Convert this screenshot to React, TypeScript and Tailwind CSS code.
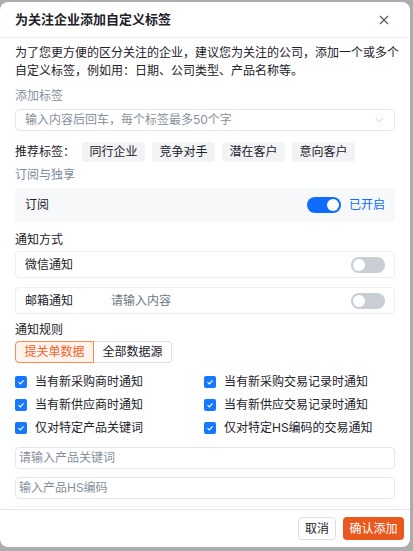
import React from "react";

const font = { fontFamily: 'Inter, "Noto Sans CJK SC", sans-serif' };

function Toggle({ on }: { on: boolean }) {
  return (
    <div
      className={`w-[34px] h-[16px] rounded-full flex items-center px-[2px] ${
        on ? "bg-[#0e6cff] justify-end" : "bg-[#c9cdd4] justify-start"
      }`}
    >
      <div className="w-[12px] h-[12px] rounded-full bg-white" />
    </div>
  );
}

function Check({ label }: { label: string }) {
  return (
    <div className="flex items-center h-[18px]">
      <div className="w-[12px] h-[12px] rounded-[2px] bg-[#1677ff] flex items-center justify-center">
        <svg width="8" height="8" viewBox="0 0 8 8">
          <path d="M1.5 4.2 L3.3 5.9 L6.6 2.3" stroke="white" strokeWidth="1.1" fill="none" />
        </svg>
      </div>
      <span className="ml-[8px] text-[12px] text-[#1d2129]">{label}</span>
    </div>
  );
}

export default function App() {
  return (
    <div className="w-[413px] h-[551px] bg-[#adadad] pt-[2px] overflow-hidden" style={font}>
      <div className="w-[410px] h-[545px] bg-white rounded-[8px] flex flex-col overflow-hidden">
        <div className="h-[36px] shrink-0 border-b border-[#eceef2] flex items-center justify-between px-[15px]">
          <span className="text-[13px] font-bold text-[#1d2129]">为关注企业添加自定义标签</span>
          <svg width="10" height="10" viewBox="0 0 10 10" className="mr-[6px]">
            <path d="M1 1 L9 9 M9 1 L1 9" stroke="#4e5969" strokeWidth="1.2" />
          </svg>
        </div>

        <div className="flex-1 flex flex-col px-[15px] pt-[6px]">
          <p className="text-[12px] leading-[18px] text-[#1d2129]">
            <span className="block whitespace-nowrap">为了您更方便的区分关注的企业，建议您为关注的公司，添加一个或多个</span>
            <span className="block whitespace-nowrap">自定义标签，例如用：日期、公司类型、产品名称等。</span>
          </p>
          <div className="mt-[7px] text-[12px] leading-[18px] text-[#86909c]">添加标签</div>
          <div className="mt-[4px] h-[22px] border border-[#e5e6eb] rounded-[4px] flex items-center justify-between pl-[9px] pr-[10px]">
            <span className="text-[12px] text-[#86909c]">输入内容后回车，每个标签最多50个字</span>
            <svg width="9" height="6" viewBox="0 0 9 6">
              <path d="M0.5 0.8 L4.5 4.8 L8.5 0.8" stroke="#c9cdd4" strokeWidth="1" fill="none" />
            </svg>
          </div>
          <div className="mt-[11px] flex items-center h-[20px]">
            <span className="text-[12px] text-[#1d2129] w-[67px]">推荐标签：</span>
            <div className="flex gap-[7px]">
              {["同行企业", "竞争对手", "潜在客户", "意向客户"].map((t) => (
                <span
                  key={t}
                  className="w-[63px] h-[20px] rounded-[4px] bg-[#f2f3f5] text-[12px] text-[#1d2129] flex items-center justify-center"
                >
                  {t}
                </span>
              ))}
            </div>
          </div>
          <div className="mt-[4px] text-[12px] leading-[18px] text-[#7d8a9c]">订阅与独享</div>
          <div className="mt-[4px] h-[34px] bg-[#f7f8fa] rounded-[2px] flex items-center pl-[10px] pr-[10px]">
            <span className="text-[12px] text-[#1d2129] flex-1">订阅</span>
            <Toggle on />
            <span className="ml-[8px] text-[12px] text-[#0e6cff]">已开启</span>
          </div>
          <div className="mt-[9px] text-[12px] leading-[18px] text-[#1d2129]">通知方式</div>
          <div className="mt-[2px] h-[27px] border border-[#eceef2] rounded-[4px] flex items-center pl-[9px] pr-[9px]">
            <span className="text-[12px] text-[#1d2129] flex-1">微信通知</span>
            <Toggle on={false} />
          </div>
          <div className="mt-[9px] h-[27px] border border-[#eceef2] rounded-[4px] flex items-center pl-[9px] pr-[9px]">
            <span className="text-[12px] text-[#1d2129] w-[86px]">邮箱通知</span>
            <span className="text-[12px] text-[#6b7785] flex-1">请输入内容</span>
            <Toggle on={false} />
          </div>
          <div className="mt-[7px] text-[12px] leading-[18px] text-[#1d2129]">通知规则</div>
          <div className="mt-[2px] flex h-[22px]">
            <div className="w-[79px] border border-[#f7895a] bg-[#fff3ec] rounded-l-[4px] text-[12px] text-[#f2642b] flex items-center justify-center">
              提关单数据
            </div>
            <div className="w-[78px] border border-l-0 border-[#dcdfe6] rounded-r-[4px] text-[12px] text-[#1d2129] flex items-center justify-center">
              全部数据源
            </div>
          </div>
          <div className="mt-[10px] grid grid-cols-[189px_1fr] gap-y-[5px]">
            <Check label="当有新采购商时通知" />
            <Check label="当有新采购交易记录时通知" />
            <Check label="当有新供应商时通知" />
            <Check label="当有新供应交易记录时通知" />
            <Check label="仅对特定产品关键词" />
            <Check label="仅对特定HS编码的交易通知" />
          </div>
          <div className="mt-[10px] h-[22px] border border-[#e5e6eb] rounded-[4px] flex items-center pl-[3px]">
            <span className="text-[12px] text-[#86909c]">请输入产品关键词</span>
          </div>
          <div className="mt-[8px] h-[22px] border border-[#e5e6eb] rounded-[4px] flex items-center pl-[3px]">
            <span className="text-[12px] text-[#86909c]">输入产品HS编码</span>
          </div>
          <div className="mt-auto mb-[2px] h-px bg-[#f2f3f5]" />
        </div>

        <div className="h-[38px] shrink-0 border-t border-[#e5e6eb] flex items-center justify-end gap-[7px] pr-[6px]">
          <button className="w-[38px] h-[23px] border border-[#dcdfe6] rounded-[4px] bg-white text-[12px] text-[#1d2129] flex items-center justify-center">
            取消
          </button>
          <button className="w-[61px] h-[23px] rounded-[4px] bg-[#e9581d] text-[12px] text-white flex items-center justify-center">
            确认添加
          </button>
        </div>
      </div>
    </div>
  );
}
